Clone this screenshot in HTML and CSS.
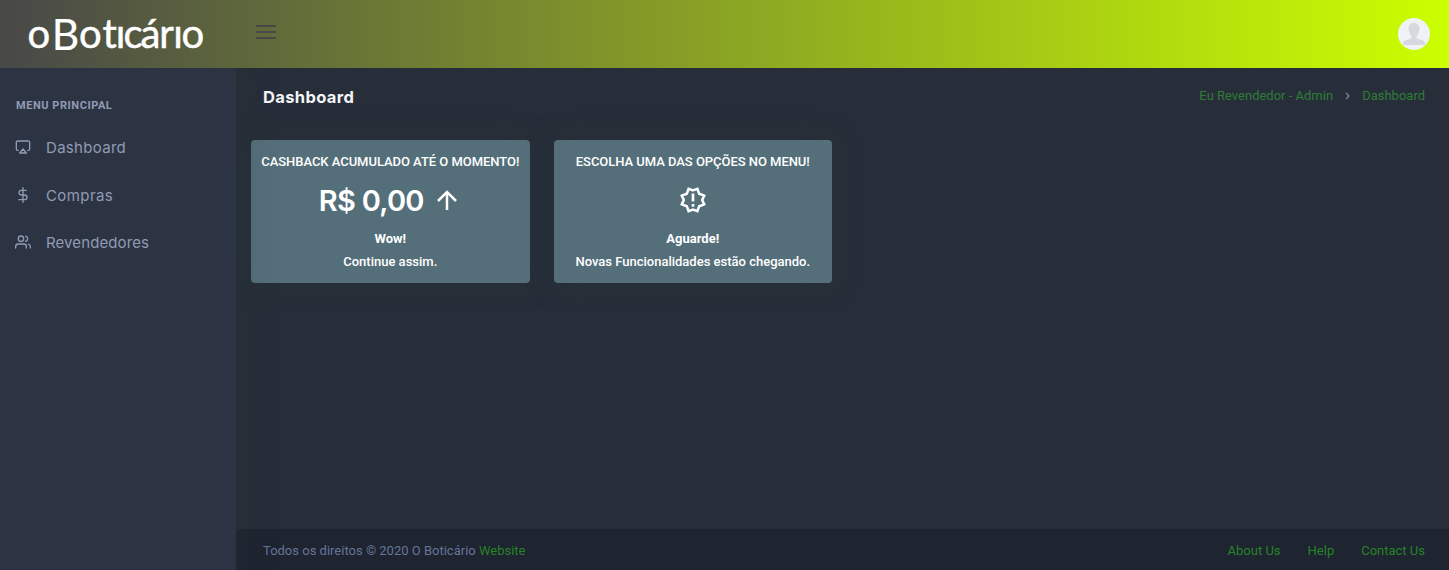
FILE: index.html
```html
<!DOCTYPE html>
<html lang="pt-BR">
<head>
<meta charset="utf-8">
<title>Dashboard</title>
<link rel="stylesheet" href="styles.css">
</head>
<body>
<header class="topbar">
  <svg class="logo" width="236" height="68" viewBox="0 0 236 68" aria-label="o Boticário">
    <text class="logo-text" y="48.300" x="27.500">o</text>
    <text class="logo-b" y="49.500" x="51.800" textLength="27.500" lengthAdjust="spacingAndGlyphs">B</text>
    <text class="logo-text" y="48.300" x="79 102.500 115.700 123.600 140.500 159.300 173.300 181.500">otıcárıo</text>
  </svg>
  <svg class="burger" width="20" height="16" viewBox="0 0 20 16"><path d="M0 2h20M0 8h20M0 14h20"/></svg>
  <svg class="avatar" width="32" height="32" viewBox="0 0 32 32"><circle cx="16" cy="16" r="16" fill="#f1f2f7"/><path fill="#d5d8de" d="M16 5c3.700 0 5.600 2.500 5.400 6-.1 3-1.300 5.200-2.700 6.600v2.700c1.700 1.500 8.300 1.600 8.300 4.700v2H5v-2c0-3.100 6.600-3.200 8.300-4.700v-2.700c-1.400-1.400-2.600-3.600-2.700-6.600C10.400 7.500 12.300 5 16 5z"/></svg>
</header>
<div class="shell">
  <nav class="sidebar">
    <div class="menu-title">MENU PRINCIPAL</div>
    <a class="item"><svg class="icon" viewBox="0 0 24 24"><path d="M5 17H4a2 2 0 0 1-2-2V5a2 2 0 0 1 2-2h16a2 2 0 0 1 2 2v10a2 2 0 0 1-2 2h-1"/><path d="M12 15l5 6H7z"/></svg><span class="label dash">Dashboard</span></a>
    <a class="item"><svg class="icon" viewBox="0 0 24 24"><path d="M12 1v22M17 5H9.500a3.500 3.500 0 0 0 0 7h5a3.500 3.500 0 0 1 0 7H6"/></svg><span class="label comp">Compras</span></a>
    <a class="item"><svg class="icon" viewBox="0 0 24 24"><path d="M17 21v-2a4 4 0 0 0-4-4H5a4 4 0 0 0-4 4v2M23 21v-2a4 4 0 0 0-3-3.870M16 3.130a4 4 0 0 1 0 7.750"/><circle cx="9" cy="7" r="4"/></svg><span class="label rev">Revendedores</span></a>
  </nav>
  <div class="page">
    <main class="main">
      <div class="heading">
        <h1>Dashboard</h1>
        <div class="crumbs"><a>Eu Revendedor - Admin</a><svg width="5" height="8" viewBox="0 0 5 8"><path d="M1 1l3 3-3 3"/></svg><a>Dashboard</a></div>
      </div>
      <div class="cards">
        <section class="card">
          <div class="card-title">CASHBACK ACUMULADO ATÉ O MOMENTO!</div>
          <div class="value"><span>R$ 0,00</span><svg width="30" height="30" viewBox="0 0 24 24"><path fill="#fff" d="M13 20h-2V8l-5.500 5.500-1.420-1.420L12 4.160l7.920 7.920-1.420 1.420L13 8v12z"/></svg></div>
          <div class="strong">Wow!</div>
          <div class="note">Continue assim.</div>
        </section>
        <section class="card">
          <div class="card-title">ESCOLHA UMA DAS OPÇÕES NO MENU!</div>
          <div class="value"><svg width="28" height="28" viewBox="0 0 28 28"><path fill="none" stroke="#fff" stroke-width="2.500" d="M14 4.400L18.400 2.800 20.200 7.800 25.200 9.600 23.200 14 25.200 18.400 20.200 20.200 18.400 25.200 14 23.600 9.600 25.200 7.800 20.200 2.800 18.400 4.800 14 2.800 9.600 7.800 7.800 9.600 2.800z"/><path stroke="#fff" stroke-width="2.700" d="M14 7.500v8M14 18v2.700"/></svg></div>
          <div class="strong">Aguarde!</div>
          <div class="note">Novas Funcionalidades estão chegando.</div>
        </section>
      </div>
    </main>
    <footer class="footer">
      <div>Todos os direitos © 2020 O Boticário <a>Website</a></div>
      <div class="links"><a>About Us</a><a>Help</a><a>Contact Us</a></div>
    </footer>
  </div>
</div>
</body>
</html>
```
FILE: styles.css
```css
* { box-sizing: border-box; }
body { margin: 0; height: 570px; overflow: hidden; background: #282e39; font: 13px/20px Roboto, sans-serif; }
.topbar { position: relative; z-index: 2; height: 68px; display: flex; align-items: center; padding-right: 19px; background: linear-gradient(90deg, #484848, #ccff00); }
.logo { flex: none; }
.logo text { fill: #fff; stroke: #fff; stroke-width: .5; font-family: Lato, sans-serif; }
.logo-text { font-size: 40px; }
.logo .logo-b { font-size: 43px; stroke-width: .2; }
.burger { margin: -4px 0 0 20px; fill: none; stroke: #484848; stroke-width: 2; }
.avatar { margin-left: auto; }
.shell { display: flex; height: 502px; }
.sidebar { position: relative; z-index: 1; width: 236px; flex: none; background: #2c3444; box-shadow: 0 0 28px rgba(35, 55, 55, .5); padding-top: 28px; color: #919bb3; }
.menu-title { font-size: 11px; font-weight: 700; letter-spacing: .55px; padding-left: 16px; margin-bottom: 8.500px; }
.item { display: flex; align-items: center; height: 47.500px; padding-left: 15px; gap: 15px; color: inherit; }
.icon { width: 16px; height: 16px; margin-top: -2px; fill: none; stroke: currentColor; stroke-width: 2; stroke-linecap: round; stroke-linejoin: round; }
.label { font: 400 15px/24px Inter, sans-serif; }
.dash { letter-spacing: .3px; }
.comp { letter-spacing: .4px; }
.rev { letter-spacing: .1px; }
.page { flex: 1; display: flex; flex-direction: column; }
.main { flex: 1; padding: 15px 24px 0 15px; }
.heading { display: flex; justify-content: space-between; height: 57px; padding-left: 12px; }
h1 { margin: 2px 0 0; font: 700 16.500px/24px Inter, sans-serif; letter-spacing: .35px; color: #f3f5f8; }
.crumbs { display: flex; align-items: center; height: 26px; gap: 12px; }
.crumbs svg { fill: none; stroke: #7b859b; stroke-width: 1.300; }
a { color: #2d7d35; }
.cards { display: flex; gap: 24px; }
.card { width: 278.500px; height: 143px; border-radius: 4px; background: #556f7a; box-shadow: 0 0 28px rgba(35, 55, 60, .4); color: #fff; text-align: center; padding-top: 12px; font-weight: 500; white-space: nowrap; }
.card-title { letter-spacing: -.04px; }
.value { display: flex; justify-content: center; align-items: center; gap: 8px; height: 40px; margin: 8px 0 9px; font: 600 29px/40px Inter, sans-serif; letter-spacing: -.75px; }
.value span { padding-top: 1px; }
.strong { font-weight: 700; }
.note { margin-top: 3px; }
.footer { height: 41px; background: #1e2430; padding: 2px 24px 0 27px; display: flex; align-items: center; justify-content: space-between; color: #66759b; }
.footer a { color: #278329; }
.links { display: flex; gap: 27px; }
```
